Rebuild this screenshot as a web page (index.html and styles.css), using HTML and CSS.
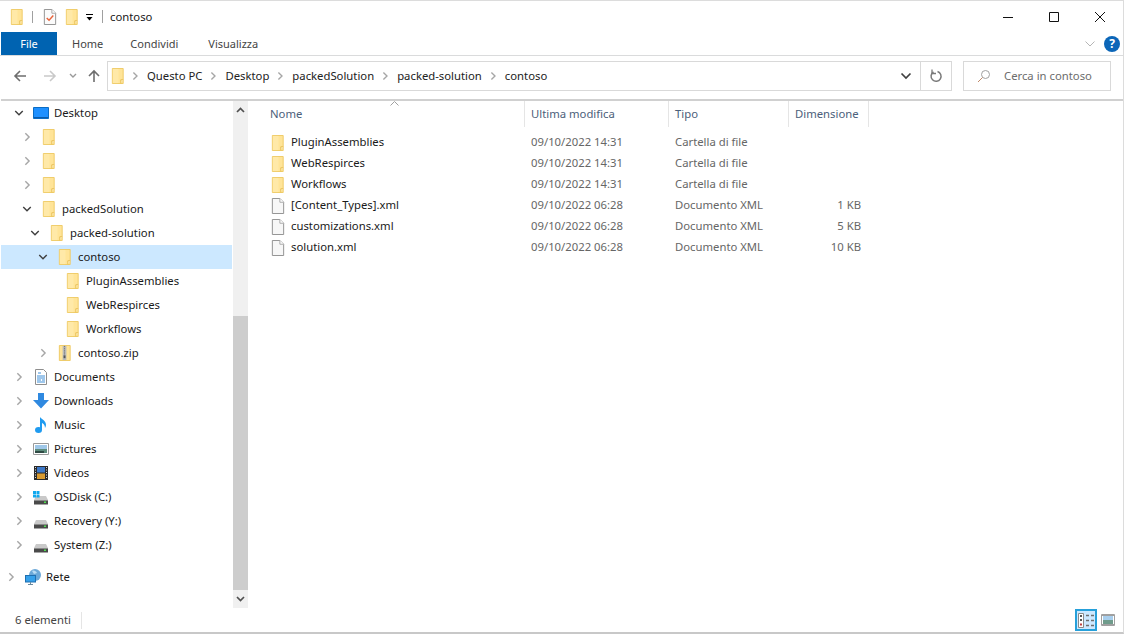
FILE: index.html
```html
<!DOCTYPE html>
<html lang="it">
<head>
    <meta charset="UTF-8">
    <meta name="viewport" content="width=device-width, initial-scale=1.0">
    <title>contoso</title>
    <link rel="stylesheet" href="styles.css">
</head>
<body>
    <svg class="defs" width="0" height="0" aria-hidden="true">
        <symbol id="folder" viewBox="0 0 13 17">
            <path d="M.5.5h11.5v16H.5z" fill="#ffe498" stroke="#efca62"/>
            <path d="M1 1h6v15H1z" fill="#ffe9a8"/>
            <path d="M9.500 16.500v-4h2.500" fill="#fff1c4" stroke="#e8bd4f"/>
        </symbol>
        <symbol id="doc" viewBox="0 0 13 17">
            <path d="M.5.500h8l4 4v12H.500z" fill="#f7f7f7" stroke="#8e8e8e"/>
            <path d="M8.500.500v4h4" fill="#fff" stroke="#a5a5a5"/>
        </symbol>
        <symbol id="chev-right" viewBox="0 0 10 12">
            <path d="M3 1.500 7.500 6 3 10.500" fill="none" stroke="#a6a6a6" stroke-width="1.700"/>
        </symbol>
        <symbol id="chev-down" viewBox="0 0 12 10">
            <path d="M1.500 2.500 6 7l4.500-4.500" fill="none" stroke="#404040" stroke-width="1.700"/>
        </symbol>
        <symbol id="drive" viewBox="0 0 16 16">
            <path d="M3 7h10l2 4H1z" fill="#c9c9c9"/>
            <rect x="1" y="11" width="14" height="4.500" fill="#4a4a4a"/>
            <rect x="1" y="11" width="14" height="1" fill="#8a8a8a"/>
            <rect x="11" y="12.500" width="2" height="1.500" fill="#4ee04e"/>
        </symbol>
    </svg>

    <div class="window">
        <header class="titlebar">
            <svg class="icon-16"><use href="#folder"/></svg>
            <span class="qat-sep"></span>
            <svg class="icon-16" viewBox="0 0 13 17">
                <path d="M.5.500h8l4 4v12H.500z" fill="#fbfbfb" stroke="#8e8e8e"/>
                <path d="M8.500.500v4h4" fill="#fff" stroke="#a5a5a5"/>
                <path d="M3 9.500l2.500 2.500L10 7" fill="none" stroke="#e8643c" stroke-width="1.500"/>
            </svg>
            <svg class="icon-16 qat-folder"><use href="#folder"/></svg>
            <svg class="qat-drop" width="10" height="8" viewBox="0 0 10 8">
                <path d="M1 .500h7" stroke="#000"/>
                <path d="M1.500 3h6L4.500 6.500z" fill="#000"/>
            </svg>
            <span class="qat-sep title-sep"></span>
            <span class="title-text">contoso</span>
            <div class="win-buttons">
                <svg width="12" height="12" viewBox="0 0 12 12"><path d="M1 6.500h10" stroke="#111"/></svg>
                <svg width="12" height="12" viewBox="0 0 12 12"><path d="M1.500 1.500h9v9h-9z" fill="none" stroke="#111"/></svg>
                <svg width="12" height="12" viewBox="0 0 12 12"><path d="M1 1l10 10M11 1 1 11" stroke="#111"/></svg>
            </div>
        </header>

        <nav class="ribbon">
            <span class="tab tab-file">File</span>
            <span class="tab tab-home">Home</span>
            <span class="tab tab-share">Condividi</span>
            <span class="tab">Visualizza</span>
            <svg class="ribbon-chev" width="12" height="8" viewBox="0 0 12 8"><path d="M1.500 1.500 6 6l4.500-4.500" fill="none" stroke="#b5b5b5"/></svg>
            <span class="help">?</span>
        </nav>

        <div class="addressbar">
            <svg class="nav-btn" width="14" height="14" viewBox="0 0 14 14"><path d="M13 7H2M7 2 2 7l5 5" fill="none" stroke="#6e6e6e" stroke-width="1.600"/></svg>
            <svg class="nav-btn nav-forward" width="14" height="14" viewBox="0 0 14 14"><path d="M1 7h11M7 2l5 5-5 5" fill="none" stroke="#c9c9c9" stroke-width="1.600"/></svg>
            <svg class="nav-btn nav-recent" width="8" height="6" viewBox="0 0 8 6"><path d="M1 1l3 3 3-3" fill="none" stroke="#9a9a9a" stroke-width="1.400"/></svg>
            <svg class="nav-btn nav-up" width="14" height="14" viewBox="0 0 14 14"><path d="M7 13V2M2 7l5-5 5 5" fill="none" stroke="#6e6e6e" stroke-width="1.600"/></svg>
            <div class="path-box">
                <svg class="icon-16"><use href="#folder"/></svg>
                <svg class="crumb-chev"><use href="#chev-right"/></svg>
                <span>Questo PC</span>
                <svg class="crumb-chev"><use href="#chev-right"/></svg>
                <span>Desktop</span>
                <svg class="crumb-chev"><use href="#chev-right"/></svg>
                <span>packedSolution</span>
                <svg class="crumb-chev"><use href="#chev-right"/></svg>
                <span>packed-solution</span>
                <svg class="crumb-chev"><use href="#chev-right"/></svg>
                <span>contoso</span>
                <svg class="path-drop" width="12" height="10"><use href="#chev-down"/></svg>
                <div class="path-refresh">
                    <svg width="14" height="14" viewBox="0 0 14 14"><path d="M8.500 2.500a5 5 0 1 1-4 .500" fill="none" stroke="#7a7a7a" stroke-width="1.500"/><path d="M3 .500v4h4" fill="none" stroke="#7a7a7a" stroke-width="1.300"/></svg>
                </div>
            </div>
            <div class="search-box">
                <svg width="14" height="14" viewBox="0 0 14 14"><circle cx="8.500" cy="5.500" r="4" fill="none" stroke="#a0a0a0"/><path d="M5.500 8.500 1 13" stroke="#c08a6a"/></svg>
                <span>Cerca in contoso</span>
            </div>
        </div>

        <div class="main">
            <aside class="tree">
                <div class="tree-rows">
                    <div class="tree-row lvl-1"><svg class="tw"><use href="#chev-down"/></svg>
                        <svg class="icon-16" viewBox="0 0 16 16"><path d="M.5 2.500h15v11H.500z" fill="#1e90ff" stroke="#0a6cc4"/><path d="M1 12h14v1H1z" fill="#0a5aa8"/></svg>
                        <span>Desktop</span></div>
                    <div class="tree-row lvl-2"><svg class="tw"><use href="#chev-right"/></svg><svg class="icon-16"><use href="#folder"/></svg></div>
                    <div class="tree-row lvl-2"><svg class="tw"><use href="#chev-right"/></svg><svg class="icon-16"><use href="#folder"/></svg></div>
                    <div class="tree-row lvl-2"><svg class="tw"><use href="#chev-right"/></svg><svg class="icon-16"><use href="#folder"/></svg></div>
                    <div class="tree-row lvl-2"><svg class="tw"><use href="#chev-down"/></svg><svg class="icon-16"><use href="#folder"/></svg><span>packedSolution</span></div>
                    <div class="tree-row lvl-3"><svg class="tw"><use href="#chev-down"/></svg><svg class="icon-16"><use href="#folder"/></svg><span>packed-solution</span></div>
                    <div class="tree-row lvl-4 selected"><svg class="tw"><use href="#chev-down"/></svg><svg class="icon-16"><use href="#folder"/></svg><span>contoso</span></div>
                    <div class="tree-row lvl-5"><i class="tw"></i><svg class="icon-16"><use href="#folder"/></svg><span>PluginAssemblies</span></div>
                    <div class="tree-row lvl-5"><i class="tw"></i><svg class="icon-16"><use href="#folder"/></svg><span>WebRespirces</span></div>
                    <div class="tree-row lvl-5"><i class="tw"></i><svg class="icon-16"><use href="#folder"/></svg><span>Workflows</span></div>
                    <div class="tree-row lvl-4"><svg class="tw"><use href="#chev-right"/></svg>
                        <svg class="icon-16" viewBox="0 0 13 17"><path d="M.5.500h11.500v16H.500z" fill="#ffe498" stroke="#efca62"/><rect x="4" y="1" width="4" height="15" fill="#b9b9b9"/><path d="M6 1v10" stroke="#666" stroke-dasharray="1 1"/><rect x="5" y="11" width="2" height="3" fill="#555"/></svg>
                        <span>contoso.zip</span></div>
                    <div class="tree-row lvl-1"><svg class="tw"><use href="#chev-right"/></svg>
                        <svg class="icon-16" viewBox="0 0 16 16"><path d="M2.500.5h8l3 3v12h-11z" fill="#fff" stroke="#8e8e8e"/><path d="M5 4h3M4 7h8M4 9h8M4 11h4M9 11h3M4 13h8" stroke="#3f8fd8"/></svg>
                        <span>Documents</span></div>
                    <div class="tree-row lvl-1"><svg class="tw"><use href="#chev-right"/></svg>
                        <svg class="icon-16" viewBox="0 0 16 16"><path d="M5 0h6v7h5l-8 8.500L0 7h5z" fill="#2f89e0"/></svg>
                        <span>Downloads</span></div>
                    <div class="tree-row lvl-1"><svg class="tw"><use href="#chev-right"/></svg>
                        <svg class="icon-16" viewBox="0 0 16 16"><ellipse cx="5.500" cy="13" rx="3.500" ry="3" fill="#1f9bf0"/><path d="M7 13V0c2 2.500 6 3.500 6 8 0 1-.5 2-1 3 .2-3-2-4.500-3-5v7z" fill="#1f9bf0"/></svg>
                        <span>Music</span></div>
                    <div class="tree-row lvl-1"><svg class="tw"><use href="#chev-right"/></svg>
                        <svg class="icon-16" viewBox="0 0 16 16"><path d="M.5 2.500h15v11H.500z" fill="#fff" stroke="#9a9a9a"/><path d="M2 4h12v4H2z" fill="#9fc7e8"/><path d="M2 8h12v4H2z" fill="#5d8c7c"/><path d="M2 10h9v2H2z" fill="#2f4a44"/></svg>
                        <span>Pictures</span></div>
                    <div class="tree-row lvl-1"><svg class="tw"><use href="#chev-right"/></svg>
                        <svg class="icon-16" viewBox="0 0 16 16"><rect x="1" y="1" width="14" height="14" fill="#2a2a2a"/><rect x="4" y="2" width="8" height="5.500" fill="#3c78c8"/><rect x="4" y="8.500" width="8" height="5.500" fill="#d89a30"/><path d="M2.500 2v12M13.500 2v12" stroke="#ddd" stroke-dasharray="1 1.500"/></svg>
                        <span>Videos</span></div>
                    <div class="tree-row lvl-1"><svg class="tw"><use href="#chev-right"/></svg>
                        <svg class="icon-16" viewBox="0 0 16 16"><use href="#drive" width="16" height="16"/><path d="M0 2h3v3H0zM3.500 2h3v3h-3zM0 5.500h3v3H0zM3.500 5.500h3v3h-3z" fill="#10a8ee"/></svg>
                        <span>OSDisk (C:)</span></div>
                    <div class="tree-row lvl-1"><svg class="tw"><use href="#chev-right"/></svg><svg class="icon-16"><use href="#drive"/></svg><span>Recovery (Y:)</span></div>
                    <div class="tree-row lvl-1"><svg class="tw"><use href="#chev-right"/></svg><svg class="icon-16"><use href="#drive"/></svg><span>System (Z:)</span></div>
                    <div class="tree-row lvl-0 tree-net"><svg class="tw"><use href="#chev-right"/></svg>
                        <svg class="icon-16" viewBox="0 0 16 16"><circle cx="10" cy="6" r="6" fill="#6ba8d8"/><path d="M7 2c2-1 4 0 5 2l-3 1z" fill="#b8dcf4"/><rect x=".5" y="6.500" width="10" height="6.500" fill="#35a0ea" stroke="#1f6fb0"/><path d="M5.500 13v2M3 15.500h5" stroke="#6a8aa0"/></svg>
                        <span>Rete</span></div>
                </div>
                <div class="scrollbar">
                    <svg class="scroll-arrow" width="9" height="6" viewBox="0 0 9 6"><path d="M1 5l3.500-3.500L8 5" fill="none" stroke="#505050" stroke-width="1.700"/></svg>
                    <div class="scroll-track"><div class="scroll-thumb"></div></div>
                    <svg class="scroll-arrow" width="9" height="6" viewBox="0 0 9 6"><path d="M1 1l3.500 3.500L8 1" fill="none" stroke="#505050" stroke-width="1.700"/></svg>
                </div>
            </aside>

            <section class="files">
                <div class="file-grid file-head">
                    <span class="head-cell">Nome
                        <svg class="sort-mark" width="9" height="5" viewBox="0 0 9 5"><path d="M.5 4.500l4-4 4 4" fill="none" stroke="#a0a0a0"/></svg>
                    </span>
                    <span class="head-cell">Ultima modifica</span>
                    <span class="head-cell">Tipo</span>
                    <span class="head-cell">Dimensione</span>
                </div>
                <div class="file-list">
                    <div class="file-grid file-row"><span class="file-name"><svg class="icon-16"><use href="#folder"/></svg>PluginAssemblies</span><span>09/10/2022 14:31</span><span>Cartella di file</span><span></span></div>
                    <div class="file-grid file-row"><span class="file-name"><svg class="icon-16"><use href="#folder"/></svg>WebRespirces</span><span>09/10/2022 14:31</span><span>Cartella di file</span><span></span></div>
                    <div class="file-grid file-row"><span class="file-name"><svg class="icon-16"><use href="#folder"/></svg>Workflows</span><span>09/10/2022 14:31</span><span>Cartella di file</span><span></span></div>
                    <div class="file-grid file-row"><span class="file-name"><svg class="icon-16"><use href="#doc"/></svg>[Content_Types].xml</span><span>09/10/2022 06:28</span><span>Documento XML</span><span class="file-size">1 KB</span></div>
                    <div class="file-grid file-row"><span class="file-name"><svg class="icon-16"><use href="#doc"/></svg>customizations.xml</span><span>09/10/2022 06:28</span><span>Documento XML</span><span class="file-size">5 KB</span></div>
                    <div class="file-grid file-row"><span class="file-name"><svg class="icon-16"><use href="#doc"/></svg>solution.xml</span><span>09/10/2022 06:28</span><span>Documento XML</span><span class="file-size">10 KB</span></div>
                </div>
            </section>
        </div>

        <footer class="statusbar">
            <span class="status-count">6 elementi</span>
            <span class="view-btn view-active">
                <svg width="19" height="17" viewBox="0 0 19 17">
                    <path d="M1.500 1.500h5v14h-5z" fill="#fff" stroke="#8a8a8a"/>
                    <path d="M3 3h2v2H3zM3 7h2v2H3z" fill="#555"/><path d="M3 11.500h2v2H3z" fill="#c04040"/>
                    <path d="M9 3.500h3M14 3.500h3M9 8.500h3M14 8.500h3M9 13.500h3M14 13.500h3" stroke="#6e6e6e" stroke-width="1.500"/>
                </svg>
            </span>
            <span class="view-btn">
                <svg width="14" height="12" viewBox="0 0 14 12"><path d="M.5.500h13v11H.500z" fill="#fff" stroke="#a0a0a0"/><path d="M1 1h12v1H1zM1 10h12v1H1z" fill="#a0a0a0"/><path d="M2 2h10v4H2z" fill="#a8cfee"/><path d="M2 6h10v4H2z" fill="#6f9c8c"/></svg>
            </span>
        </footer>
    </div>
</body>
</html>
```

FILE: styles.css
```css
* {
    box-sizing: border-box;
}
body {
    margin: 0;
    background-color: white;
    font-family: "Noto Sans", "Open Sans", sans-serif;
    font-size: 11.3px;
    color: #1a1a1a;
    overflow: hidden;
}
.defs {
    position: absolute;
}
svg {
    flex: none;
    display: block;
}
.window {
    width: 1124px;
    height: 634px;
    display: flex;
    flex-direction: column;
    border-top: 1px solid #dcdcdc;
    border-right: 1px solid #dcdcdc;
    border-bottom: 2px solid #c8c8c8;
}
.icon-16 {
    width: 16px;
    height: 16px;
}

/* title bar */
.titlebar {
    height: 31px;
    display: flex;
    align-items: center;
    padding-left: 9px;
}
.qat-sep {
    width: 1px;
    height: 12px;
    background-color: #a0a0a0;
    margin: 0 9px 0 7px;
}
.qat-folder {
    margin-left: 6px;
}
.qat-drop {
    margin-left: 5px;
    margin-top: 3px;
}
.title-sep {
    margin: 0 7px 0 7px;
    height: 13px;
}
.win-buttons {
    margin-left: auto;
    display: flex;
    gap: 34px;
    padding-right: 17px;
}

/* ribbon tabs */
.ribbon {
    height: 24px;
    display: flex;
    align-items: center;
    border-bottom: 1px solid #dadbdc;
    padding-left: 1px;
    color: #444;
    font-size: 11px;
}
.tab {
    height: 100%;
    display: flex;
    align-items: center;
}
.tab-file {
    width: 56px;
    justify-content: center;
    background-color: #0063b1;
    color: white;
}
.tab-home {
    margin-left: 15px;
    margin-right: 27px;
}
.tab-share {
    margin-right: 30px;
}
.ribbon-chev {
    margin-left: auto;
}
.help {
    width: 16px;
    height: 16px;
    border-radius: 50%;
    margin: 0 3px 0 8px;
    background-color: #0c66b8;
    color: white;
    font-weight: bold;
    font-size: 12px;
    line-height: 16px;
    text-align: center;
}

/* address row */
.addressbar {
    height: 45px;
    display: flex;
    align-items: center;
    padding: 0 0 4px 12px;
    border-bottom: 2px solid #d0d0d0;
    margin-left: 1px;
}
.nav-btn {
    margin-right: 16px;
}
.nav-forward {
    margin-right: 12px;
}
.nav-recent {
    margin-right: 10px;
}
.nav-up {
    margin-right: 6px;
}
.path-box {
    width: 845px;
    height: 30px;
    display: flex;
    align-items: center;
    border: 1px solid #d9d9d9;
    padding-left: 2px;
    color: #222;
}
.path-box span {
    margin-right: 2px;
}
.crumb-chev {
    width: 8px;
    height: 12px;
    margin: 0 8px 0 5px;
}
.path-drop {
    margin-left: auto;
    margin-right: 8px;
}
.path-refresh {
    width: 31px;
    height: 100%;
    display: flex;
    align-items: center;
    justify-content: center;
    border-left: 1px solid #d9d9d9;
}
.search-box {
    width: 148px;
    height: 30px;
    margin-left: 11px;
    display: flex;
    align-items: center;
    gap: 13px;
    border: 1px solid #d9d9d9;
    padding-left: 13px;
    color: #6d6d6d;
}

/* navigation tree */
.main {
    flex: 1;
    display: flex;
    min-height: 0;
}
.tree {
    width: 248px;
    display: flex;
    padding-left: 1px;
}
.tree-rows {
    width: 231px;
    margin-right: 1px;
}
.tree-row {
    height: 24px;
    display: flex;
    align-items: center;
}
.tree-row span {
    padding-bottom: 2px;
}
.tree-row .tw {
    width: 10px;
    height: 10px;
    margin-right: 9px;
    flex: none;
}
.tree-row .icon-16 {
    margin-right: 5px;
}
.tree-row.selected {
    background-color: #cce8ff;
}
.tree-net {
    margin-top: 8px;
}
.lvl-0 { padding-left: 5px; }
.lvl-1 { padding-left: 13px; }
.lvl-2 { padding-left: 21px; }
.lvl-3 { padding-left: 29px; }
.lvl-4 { padding-left: 37px; }
.lvl-5 { padding-left: 45px; }
.scrollbar {
    width: 15px;
    background-color: #f0f0f0;
    display: flex;
    flex-direction: column;
    align-items: center;
}
.scroll-arrow {
    margin: 6px 0;
}
.scroll-track {
    flex: 1;
    width: 100%;
    display: flex;
    align-items: flex-end;
}
.scroll-thumb {
    width: 100%;
    height: 274px;
    background-color: #cdcdcd;
}

/* file list */
.files {
    flex: 1;
    padding-left: 16px;
}
.file-grid {
    display: grid;
    grid-template-columns: 261px 144px 120px 80px;
}
.file-head {
    height: 26px;
    color: #4c607a;
}
.head-cell {
    position: relative;
    display: flex;
    align-items: center;
    padding: 0 0 2px 6px;
    border-right: 1px solid #e5e5e5;
}
.sort-mark {
    position: absolute;
    top: 0;
    left: 126px;
}
.file-list {
    padding-top: 5px;
}
.file-row {
    height: 21px;
    align-items: center;
    color: #666;
}
.file-row span {
    padding: 0 0 2px 6px;
}
.file-name {
    display: flex;
    align-items: center;
    gap: 5px;
    color: #1a1a1a;
}
.file-name svg {
    margin-top: 2px;
}
.file-row .file-size {
    text-align: right;
    padding-right: 8px;
}

/* status bar */
.statusbar {
    height: 24px;
    display: flex;
    align-items: center;
    padding: 0 7px 0 15px;
    color: #444;
}
.status-count {
    padding: 0 10px 2px 0;
    border-right: 1px solid #e5e5e5;
    margin-right: auto;
}
.view-btn {
    height: 22px;
    display: flex;
    align-items: center;
    padding: 0 1px;
}
.view-active {
    width: 22px;
    justify-content: center;
    background-color: #cce8ff;
    border: 2px solid #26a0da;
    margin-right: 3px;
}
```
